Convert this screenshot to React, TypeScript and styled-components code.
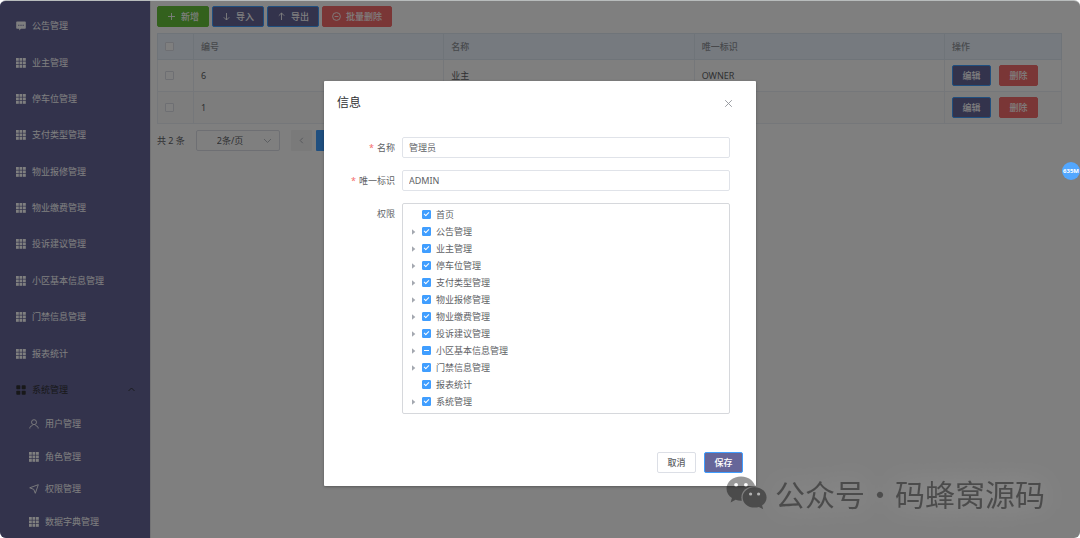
import React from "react";
import styled, { createGlobalStyle, css } from "styled-components";

const GlobalStyle = createGlobalStyle`
  *, *::before, *::after { box-sizing: border-box; }
  body {
    margin: 0;
    background: #fff;
    color: #606266;
    font-family: "Noto Sans", "Noto Sans CJK SC", sans-serif;
    font-size: 9px;
    line-height: 12px;
  }
  button, input, select { font: inherit; color: inherit; margin: 0; }
  svg { display: block; flex: none; }
`;

const Screen = styled.div`
  position: relative;
  display: flex;
  min-height: 100vh;
  overflow: hidden;
  border-radius: 6px;
  border-top: 1px solid #b8bcbc;
  background: #fff;
`;

/* Sidebar */

const Sidebar = styled.nav`
  display: flex;
  flex-direction: column;
  flex: none;
  width: 150px;
  padding-top: 7px;
  background: #666699;
  box-shadow: 1px 0 0 #e6e6ea;
`;

const MenuLink = styled.a<{ $sub?: boolean; $open?: boolean }>`
  display: flex;
  align-items: center;
  gap: 6px;
  flex: ${(p) => (p.$sub ? 33 : 37)} 1 0;
  padding: 0 14px 0 ${(p) => (p.$sub ? 29 : 16)}px;
  color: ${(p) => (p.$open ? "#303133" : "#fff")};
  text-decoration: none;
  white-space: nowrap;
`;

const MenuLabel = styled.span`
  flex: 1;
`;

/* Content */

const Content = styled.main`
  flex: 1;
  min-width: 0;
  padding: 5px 18px 0 7px;
`;

const Toolbar = styled.div`
  display: flex;
  gap: 3px;
`;

type Tone = "success" | "primary" | "danger" | "plain";

const tones = {
  success: css`background: #67c23a; border-color: #67c23a; color: #fff;`,
  primary: css`background: #666699; border-color: #409eff; color: #fff;`,
  danger: css`background: #f56c6c; border-color: #f56c6c; color: #fff;`,
  plain: css`background: #fff; border-color: #dcdfe6; color: #606266;`,
};

const Button = styled.button<{ $tone: Tone }>`
  display: inline-flex;
  align-items: center;
  justify-content: center;
  gap: 5px;
  min-width: 39px;
  height: 21px;
  padding: 0 9px;
  border: 1px solid;
  border-radius: 2px;
  font-weight: 500;
  white-space: nowrap;
  ${(p) => tones[p.$tone]}
`;

const Table = styled.table`
  width: 100%;
  margin-top: 6px;
  border-collapse: collapse;
  table-layout: fixed;
  border: 1px solid #ebeef5;
`;

const Th = styled.th<{ $width?: number }>`
  width: ${(p) => (p.$width ? `${p.$width}px` : "auto")};
  height: 26px;
  padding: 0 7px;
  border: 1px solid #dfe8f2;
  background: #ecf5ff;
  color: #909399;
  font-weight: 500;
  text-align: left;
`;

const Tr = styled.tr<{ $striped?: boolean }>`
  background: ${(p) => (p.$striped ? "#fafafa" : "#fff")};
`;

const Td = styled.td`
  height: 32px;
  padding: 0 7px;
  border: 1px solid #ebeef5;
`;

const RowActions = styled.div`
  display: flex;
  gap: 8px;
`;

const Check = styled.input.attrs({ type: "checkbox" })`
  appearance: none;
  display: block;
  position: relative;
  flex: none;
  width: 9px;
  height: 9px;
  border: 1px solid #dcdfe6;
  border-radius: 1px;
  background: #fff;

  &:checked, &:indeterminate {
    background: #409eff;
    border-color: #409eff;
  }
  &:checked::after {
    content: "";
    position: absolute;
    left: 2px;
    top: 0;
    width: 3px;
    height: 5px;
    border: solid #fff;
    border-width: 0 1px 1px 0;
    transform: rotate(45deg);
  }
  &:indeterminate::after {
    content: "";
    position: absolute;
    left: 1px;
    top: 3px;
    width: 5px;
    height: 1px;
    background: #fff;
  }
`;

const Pagination = styled.div`
  display: flex;
  align-items: center;
  gap: 11px;
  margin-top: 6px;
`;

const SelectWrap = styled.label`
  display: grid;
  grid-template-columns: 1fr;
  align-items: center;
  width: 84px;

  select, svg { grid-area: 1 / 1; }
  svg { justify-self: end; margin-right: 8px; pointer-events: none; color: #b0b4bc; }
`;

const Select = styled.select`
  appearance: none;
  height: 21px;
  padding: 0 20px;
  border: 1px solid #dcdfe6;
  border-radius: 2px;
  background: #fff;
`;

const Pages = styled.div`
  display: flex;
  gap: 4px;
`;

const PageButton = styled.button<{ $current?: boolean }>`
  display: grid;
  place-items: center;
  width: 21px;
  height: 21px;
  padding: 0;
  border: 0;
  border-radius: 1px;
  background: ${(p) => (p.$current ? "#409eff" : "#f4f4f5")};
  color: ${(p) => (p.$current ? "#fff" : "#a8abb2")};
`;

/* Dialog */

const Overlay = styled.div`
  position: absolute;
  inset: 0;
  display: flex;
  justify-content: center;
  align-items: flex-start;
  padding-top: 80px;
  background: rgba(0, 0, 0, 0.5);
`;

const Dialog = styled.section`
  width: 40%;
  border-radius: 1px;
  background: #fff;
  box-shadow: 0 1px 3px rgba(0, 0, 0, 0.3);
`;

const DialogHeader = styled.header`
  display: flex;
  align-items: center;
  justify-content: space-between;
  padding: 13px 23px 0 13px;
`;

const DialogTitle = styled.h2`
  margin: 0;
  color: #303133;
  font-size: 12px;
  line-height: 18px;
  font-weight: 400;
`;

const CloseButton = styled.button`
  padding: 0;
  border: 0;
  background: none;
  color: #909399;
`;

const Form = styled.form`
  display: flex;
  flex-direction: column;
  gap: 12px;
  padding: 25px 26px 0 13px;
`;

const Field = styled.div`
  display: grid;
  grid-template-columns: 58px 1fr;
  column-gap: 7px;
`;

const FieldLabel = styled.label<{ $required?: boolean }>`
  line-height: 21px;
  text-align: right;
  ${(p) => p.$required && css`
    &::before { content: "*"; margin-right: 3px; color: #f56c6c; }
  `}
`;

const TextInput = styled.input`
  width: 100%;
  height: 21px;
  padding: 0 6px;
  border: 1px solid #e0e3e9;
  border-radius: 2px;
  background: #fff;
`;

const Tree = styled.ul`
  margin: 0;
  padding: 2px 8px 3px;
  list-style: none;
  border: 1px solid #d6d8dc;
  border-radius: 2px;
`;

const TreeRow = styled.li`
  display: flex;
  align-items: center;
  height: 17px;
`;

const CaretSlot = styled.span`
  width: 11px;
`;

const TreeLabel = styled.label`
  display: flex;
  align-items: center;
  gap: 5px;
`;

const DialogFooter = styled.footer`
  display: flex;
  justify-content: flex-end;
  gap: 8px;
  padding: 38px 13px 13px;
`;

/* Floating items */

const MemoryBadge = styled.div`
  position: absolute;
  right: 0;
  top: 161px;
  display: grid;
  place-items: center;
  width: 18px;
  height: 18px;
  border-radius: 50%;
  background: #52a7ff;
  color: #fff;
  font-size: 6px;
  font-weight: 700;
`;

const Watermark = styled.div`
  position: absolute;
  right: 35px;
  bottom: 25px;
  display: flex;
  align-items: center;
  gap: 7px;
  opacity: 0.4;
  color: #000;
  font-family: "Noto Sans CJK SC", sans-serif;
  font-size: 30px;
  line-height: 40px;
  text-shadow: 0 0 28px rgba(255, 255, 255, 0.6);
`;

const WatermarkText = styled.span`
  display: flex;
`;

/* Icons */

const GridIcon = () => (
  <svg width="10" height="10" viewBox="0 0 10 10" fill="currentColor">
    {[0, 3.5, 7].map((y) => [0, 3.5, 7].map((x) => (
      <rect key={`${x}-${y}`} x={x} y={y} width="2.8" height="2.8" />
    )))}
  </svg>
);

const ChatIcon = () => (
  <svg width="10" height="10" viewBox="0 0 10 10">
    <path d="M1 .5h8a.8.8 0 0 1 .8.8v5.6a.8.8 0 0 1-.8.8H5L3.2 9.600V7.700H1a.8.8 0 0 1-.8-.8V1.300A.8.8 0 0 1 1 .5Z" fill="currentColor" />
    <path d="M2.200 3.700h1.200v1H2.200zm2.200 0h1.200v1H4.400zm2.200 0h1.200v1H6.600z" fill="#666699" />
  </svg>
);

const MenuIcon = () => (
  <svg width="10" height="10" viewBox="0 0 10 10" fill="currentColor">
    <rect x=".3" y=".3" width="4" height="4" rx=".8" />
    <rect x="5.7" y=".3" width="4" height="4" rx=".8" />
    <rect x=".3" y="5.7" width="4" height="4" rx=".8" />
    <rect x="5.7" y="5.7" width="4" height="4" rx=".8" />
  </svg>
);

const line = { fill: "none", stroke: "currentColor", strokeWidth: 0.9 } as const;

const UserIcon = () => (
  <svg width="10" height="10" viewBox="0 0 10 10" {...line}>
    <circle cx="5" cy="3.2" r="2.5" />
    <path d="M.8 9.5V8.8Q.9 7 3.6 6.5M9.2 9.5V8.8Q9.1 7 6.4 6.5" />
  </svg>
);

const SendIcon = () => (
  <svg width="10" height="10" viewBox="0 0 10 10" {...line}>
    <path d="M9.3.7.7 3.8 4.8 5.4 6.3 9.3Z" />
  </svg>
);

const paths = {
  plus: "M4.5 1v7M1 4.5h7",
  down: "M4.5 1v7M1.8 5.3l2.7 2.7 2.7-2.7",
  up: "M4.5 8V1M1.8 3.7 4.5 1l2.7 2.7",
  remove: "M8.4 4.5a3.9 3.9 0 1 1-7.8 0 3.9 3.9 0 0 1 7.8 0ZM2.6 4.5h3.8",
  close: "M1.2 1.2l6.6 6.6M7.8 1.2 1.2 7.8",
  chevronUp: "M1.5 6l3-3 3 3",
  chevronDown: "M1 3l3.5 3.5L8 3",
  chevronLeft: "M5.8 1.8 3.2 4.5l2.6 2.7",
};

const LineIcon = ({ name }: { name: keyof typeof paths }) => (
  <svg width="9" height="9" viewBox="0 0 9 9" {...line}>
    <path d={paths[name]} />
  </svg>
);

const Caret = () => (
  <svg width="5" height="6" viewBox="0 0 5 6">
    <path d="M1 .3 4.300 3 1 5.700Z" fill="#a4a8b0" />
  </svg>
);

const WechatIcon = () => (
  <svg width="42" height="34" viewBox="0 0 42 34">
    <mask id="bubble-gap">
      <rect width="42" height="34" fill="#fff" />
      <ellipse cx="28.6" cy="21.4" rx="13.2" ry="11.4" fill="#000" />
    </mask>
    <g mask="url(#bubble-gap)">
      <path d="M15 .5C7 .5.5 5.9.5 12.7c0 3.9 2.1 7.2 5.4 9.4L4.6 26.4l5-2.6c1.7.6 3.5.9 5.4.9 8 0 14.5-5.3 14.5-12S23 .5 15 .5Z" />
      <circle cx="10.1" cy="8.8" r="1.9" fill="#fff" />
      <circle cx="19.9" cy="8.8" r="1.9" fill="#fff" />
    </g>
    <path d="M28.6 11.2c-6.700 0-12 4.500-12 10.200s5.300 10.200 12 10.200c1.500 0 3-.2 4.300-.7l4.300 2.300-1.100-3.800c2.700-1.900 4.500-4.700 4.500-8 0-5.700-5.400-10.200-12-10.200Z" />
    <circle cx="24.6" cy="18" r="1.6" fill="#fff" />
    <circle cx="32.6" cy="18" r="1.6" fill="#fff" />
  </svg>
);

/* Data */

const menu = [
  "公告管理", "业主管理", "停车位管理", "支付类型管理", "物业报修管理",
  "物业缴费管理", "投诉建议管理", "小区基本信息管理", "门禁信息管理", "报表统计",
];

const subMenu = [
  { label: "用户管理", Icon: UserIcon },
  { label: "角色管理", Icon: GridIcon },
  { label: "权限管理", Icon: SendIcon },
  { label: "数据字典管理", Icon: GridIcon },
];

const roles = [
  { id: 6, name: "业主", key: "OWNER" },
  { id: 1, name: "管理员", key: "ADMIN" },
];

const permissions = ["首页", ...menu, "系统管理"];
const leaves = ["首页", "报表统计"];
const partial = "小区基本信息管理";

export default function App() {
  return (
    <Screen>
      <GlobalStyle />
      <Sidebar>
        {menu.map((label, i) => (
          <MenuLink href="#" key={label}>
            {i === 0 ? <ChatIcon /> : <GridIcon />}
            <MenuLabel>{label}</MenuLabel>
          </MenuLink>
        ))}
        <MenuLink href="#" $open>
          <MenuIcon />
          <MenuLabel>系统管理</MenuLabel>
          <LineIcon name="chevronUp" />
        </MenuLink>
        {subMenu.map(({ label, Icon }) => (
          <MenuLink href="#" key={label} $sub>
            <Icon />
            <MenuLabel>{label}</MenuLabel>
          </MenuLink>
        ))}
      </Sidebar>

      <Content>
        <Toolbar>
          <Button $tone="success"><LineIcon name="plus" />新增</Button>
          <Button $tone="primary"><LineIcon name="down" />导入</Button>
          <Button $tone="primary"><LineIcon name="up" />导出</Button>
          <Button $tone="danger"><LineIcon name="remove" />批量删除</Button>
        </Toolbar>
        <Table>
          <thead>
            <tr>
              <Th $width={36}><Check aria-label="全选" /></Th>
              <Th>编号</Th>
              <Th>名称</Th>
              <Th>唯一标识</Th>
              <Th $width={117}>操作</Th>
            </tr>
          </thead>
          <tbody>
            {roles.map((role, i) => (
              <Tr key={role.id} $striped={i % 2 === 1}>
                <Td><Check aria-label={role.name} /></Td>
                <Td>{role.id}</Td>
                <Td>{role.name}</Td>
                <Td>{role.key}</Td>
                <Td>
                  <RowActions>
                    <Button $tone="primary">编辑</Button>
                    <Button $tone="danger">删除</Button>
                  </RowActions>
                </Td>
              </Tr>
            ))}
          </tbody>
        </Table>
        <Pagination>
          <span>共 2 条</span>
          <SelectWrap>
            <Select aria-label="每页条数"><option>2条/页</option></Select>
            <LineIcon name="chevronDown" />
          </SelectWrap>
          <Pages>
            <PageButton aria-label="上一页"><LineIcon name="chevronLeft" /></PageButton>
            <PageButton $current>1</PageButton>
          </Pages>
        </Pagination>
      </Content>

      <Overlay>
        <Dialog role="dialog" aria-modal="true" aria-labelledby="dialog-title">
          <DialogHeader>
            <DialogTitle id="dialog-title">信息</DialogTitle>
            <CloseButton aria-label="关闭"><LineIcon name="close" /></CloseButton>
          </DialogHeader>
          <Form id="role-form">
            <Field>
              <FieldLabel htmlFor="name" $required>名称</FieldLabel>
              <TextInput id="name" defaultValue="管理员" />
            </Field>
            <Field>
              <FieldLabel htmlFor="flag" $required>唯一标识</FieldLabel>
              <TextInput id="flag" defaultValue="ADMIN" />
            </Field>
            <Field>
              <FieldLabel as="span" id="permission-label">权限</FieldLabel>
              <Tree aria-labelledby="permission-label">
                {permissions.map((label) => (
                  <TreeRow key={label}>
                    <CaretSlot>{!leaves.includes(label) && <Caret />}</CaretSlot>
                    <TreeLabel>
                      <Check
                        defaultChecked={label !== partial}
                        ref={(el: HTMLInputElement | null) => {
                          if (el) el.indeterminate = label === partial;
                        }}
                      />
                      {label}
                    </TreeLabel>
                  </TreeRow>
                ))}
              </Tree>
            </Field>
          </Form>
          <DialogFooter>
            <Button type="button" $tone="plain">取消</Button>
            <Button type="submit" form="role-form" $tone="primary">保存</Button>
          </DialogFooter>
        </Dialog>
      </Overlay>

      <MemoryBadge>635M</MemoryBadge>
      <Watermark>
        <WechatIcon />
        <WatermarkText>
          <span>公众号</span>
          <span>·</span>
          <span>码蜂窝源码</span>
        </WatermarkText>
      </Watermark>
    </Screen>
  );
}
